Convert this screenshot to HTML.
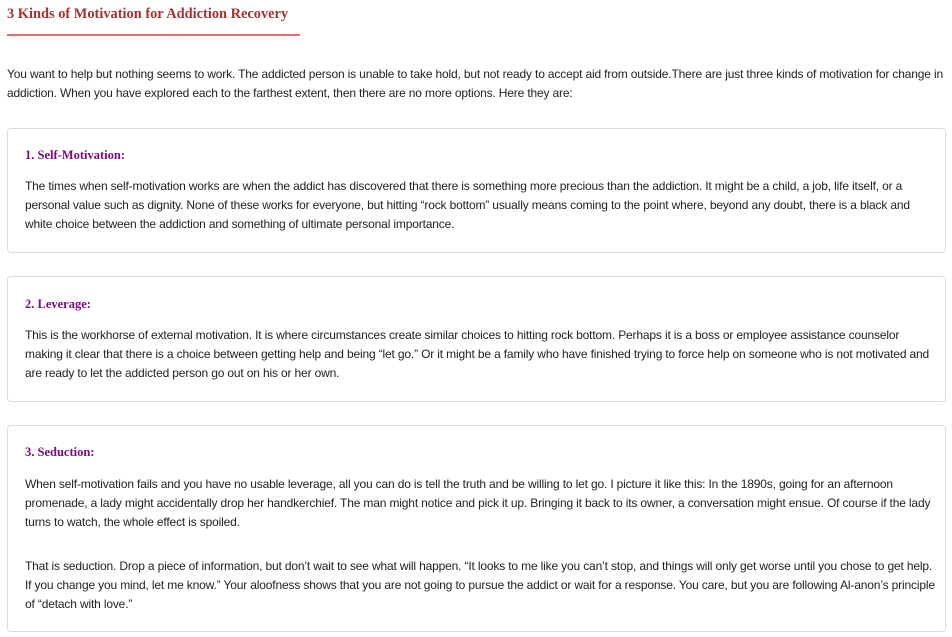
<!DOCTYPE html>
<html><head><meta charset="utf-8"><style>
html,body{margin:0;padding:0;background:#fff;width:952px;height:637px;overflow:hidden}
body{font-family:"Liberation Sans",Arial,sans-serif;font-size:12px;color:#222;letter-spacing:-0.16px}
.t{position:absolute;left:7px;top:6px;margin:0;font-family:"Liberation Serif",serif;font-weight:bold;font-size:14.4px;color:#a33232;letter-spacing:0}
.line{position:absolute;left:7px;top:34px;width:293px;height:2px;background:#e86a6a}
p{margin:0;line-height:19px}
.intro{position:absolute;left:7px;top:65px;width:940px}
.box{position:absolute;left:7px;width:912px;border:1px solid #dcdcdc;border-radius:4px;padding:0 8px 0 17px}
h3{margin:0;font-family:"Liberation Serif",serif;font-weight:bold;font-size:12.5px;color:#7d0a7d;line-height:19px;letter-spacing:0}
</style></head><body>
<h1 class="t">3 Kinds of Motivation for Addiction Recovery</h1>
<div class="line"></div>
<p class="intro">You want to help but nothing seems to work. The addicted person is unable to take hold, but not ready to accept aid from outside.There are just three kinds of motivation for change in addiction. When you have explored each to the farthest extent, then there are no more options. Here they are:</p>

<div class="box" style="top:128px;height:123px">
<h3 style="margin-top:17px">1. Self-Motivation:</h3>
<p style="margin-top:12px">The times when self-motivation works are when the addict has discovered that there is something more precious than the addiction. It might be a child, a job, life itself, or a personal value such as dignity. None of these works for everyone, but hitting “rock bottom” usually means coming to the point where, beyond any doubt, there is a black and white choice between the addiction and something of ultimate personal importance.</p>
</div>

<div class="box" style="top:276px;height:124px">
<h3 style="margin-top:18px">2. Leverage:</h3>
<p style="margin-top:12px">This is the workhorse of external motivation. It is where circumstances create similar choices to hitting rock bottom. Perhaps it is a boss or employee assistance counselor making it clear that there is a choice between getting help and being “let go.” Or it might be a family who have finished trying to force help on someone who is not motivated and are ready to let the addicted person go out on his or her own.</p>
</div>

<div class="box" style="top:425px;height:205px">
<h3 style="margin-top:17px">3. Seduction:</h3>
<p style="margin-top:13px">When self-motivation fails and you have no usable leverage, all you can do is tell the truth and be willing to let go. I picture it like this: In the 1890s, going for an afternoon promenade, a lady might accidentally drop her handkerchief. The man might notice and pick it up. Bringing it back to its owner, a conversation might ensue. Of course if the lady turns to watch, the whole effect is spoiled.</p>
<p style="margin-top:25px">That is seduction. Drop a piece of information, but don’t wait to see what will happen. “It looks to me like you can’t stop, and things will only get worse until you chose to get help. If you change you mind, let me know.” Your aloofness shows that you are not going to pursue the addict or wait for a response. You care, but you are following Al-anon’s principle of “detach with love.”</p>
</div>
</body></html>
